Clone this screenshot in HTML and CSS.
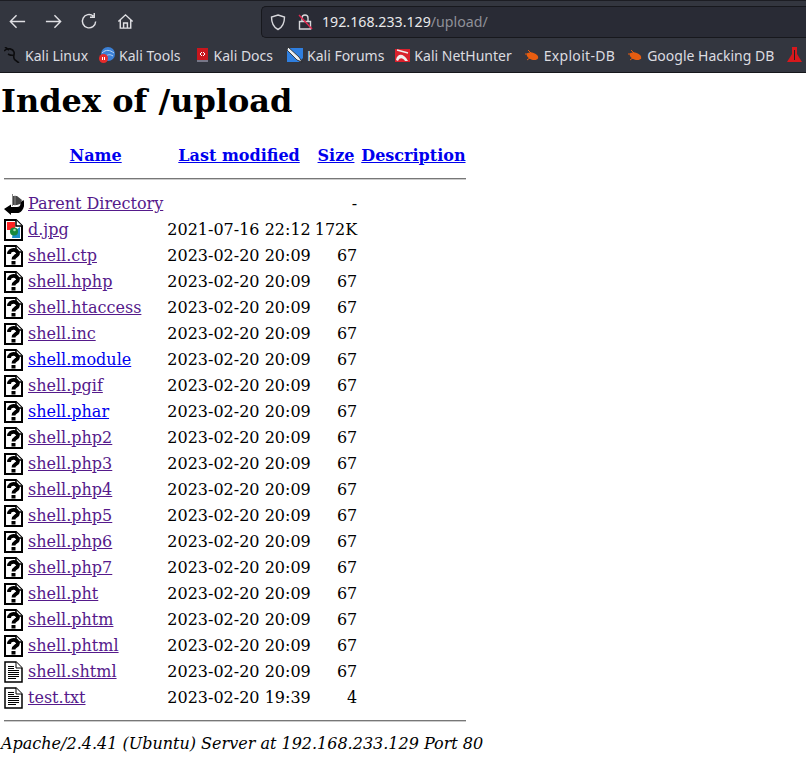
FILE: index.html
```html
<!DOCTYPE html>
<html>
<head>
<meta charset="utf-8">
<title>Index of /upload</title>
<link rel="stylesheet" href="styles.css">
</head>
<body>
<svg class="defs" width="0" height="0">
  <symbol id="doc" viewBox="0 0 20 22"><path d="M1 1H12L18 7V21H1Z" fill="#fff" stroke="#000" stroke-width="2"/><path d="M12 1V7H18" fill="#fff" stroke="#000" stroke-width="1.500"/></symbol>
  <symbol id="unknown" viewBox="0 0 20 22"><use href="#doc"/><path d="M5 9C5 3.500 14 3.500 14 8.500C14 11 9.500 11 9.500 14.500" fill="none" stroke="#000" stroke-width="3.800"/><rect x="7.500" y="16" width="4" height="3.500" fill="#000"/></symbol>
  <symbol id="text" viewBox="0 0 20 22"><path d="M1 1H12L18 7V21H1Z" fill="#fff" stroke="#000" stroke-width="1.500"/><path d="M12 1V7H18" fill="#fff" stroke="#000"/><path d="M4 5.500H10M4 7.500H10M4 9.500H15M4 11.500H15M4 13.500H15M4 15.500H15M4 17.500H12" stroke="#000"/></symbol>
  <symbol id="image" viewBox="0 0 20 22"><use href="#doc"/><path d="M3 3H11V11H3Z" fill="#f22"/><path d="M9 13L16 8V19H8Z" fill="#1c8fc8"/><circle cx="10" cy="12.500" r="4" fill="#17893c"/><circle cx="10.500" cy="11" r="1.300" fill="#9fdcae"/></symbol>
  <symbol id="back" viewBox="0 0 20 22"><path d="M0 16L7 11.500V14H13C16 14 17 12 16 9.500L19.500 7C21 11 20 15 18 17.500C16.500 19.500 15 20 13 20H7V22Z" fill="#000"/><path d="M8 3L13 3L18 7L16 11L13 12H8Z" fill="#444"/><path d="M8.500 1V13M11 2.500V12.500" stroke="#888"/></symbol>
</svg>
<header class="chrome">
  <div class="navbar">
    <div class="navicons">
      <svg class="nav" viewBox="0 0 20 20"><path d="M18 10H3M9 3.500L2.500 10L9 16.500"/></svg>
      <svg class="nav" viewBox="0 0 20 20"><path d="M2 10H17M11 3.500L17.500 10L11 16.500"/></svg>
      <svg class="nav" viewBox="0 0 20 20"><path d="M16.500 10A7 7 0 1 1 14 4.300M15 1V5.500H10.500"/></svg>
      <svg class="nav" viewBox="0 0 20 20"><path d="M2.500 10L10 3L17.500 10M4.500 8.500V17H15.500V8.500M8 17V11.500H12V17"/></svg>
    </div>
    <div class="urlbar">
      <svg class="shield" viewBox="0 0 18 18"><path d="M9 2L15.500 4C15.500 10 14 14 9 16.500C4 14 2.500 10 2.500 4Z"/></svg>
      <svg class="lock" viewBox="0 0 18 18"><path d="M6 8V5A3 3 0 0 1 12 5V8M3.500 8.500H14.500V16H3.500Z"/><path class="slash" d="M3 2L16 16"/></svg>
      <span class="host">192.168.233.129</span><span class="path">/upload/</span>
    </div>
  </div>
  <nav class="bookmarks">
    <span class="bm first"><svg class="fav" viewBox="0 0 16 16"><path d="M0 4C4 0 9 2 10 5C11 8 8 10 11 13L15 16M5 3L1 0M10 8C7 9 6 8 4 7" fill="none" stroke="#0c0c0e" stroke-width="1.600"/></svg>Kali Linux</span>
    <span class="bm"><svg class="fav" viewBox="0 0 16 16"><circle cx="9" cy="7" r="7" fill="#3b80d6"/><path d="M3 6C7 2 11 3 15 6M6 11C8 7 11 7 14 9" stroke="#bcd6f5" fill="none"/><circle cx="4.500" cy="11.500" r="4.500" fill="#e62b2b"/><path d="M3.500 10V13M5.500 10V13" stroke="#fff"/></svg>Kali Tools</span>
    <span class="bm pad1"><svg class="fav" viewBox="0 0 16 16"><path d="M3 1H14V13H3Z" fill="#c8161d"/><path d="M3 13H14V15H3Z" fill="#778"/><path d="M6 7L8 5M6 7L8 9M11 7L9 5M11 7L9 9" stroke="#fff"/></svg>Kali Docs</span>
    <span class="bm pad2"><svg class="fav" viewBox="0 0 16 16"><path d="M0 1H16V11L12 15H0Z" fill="#2f7fe0"/><path d="M1 0L12 10L15 15L10 13L0 3Z" fill="#eee" stroke="#222" stroke-width=".8"/></svg>Kali Forums</span>
    <span class="bm tuck"><svg class="fav" viewBox="0 0 16 16"><path d="M1 2H16V15H1Z" fill="#d9202c"/><path d="M2 13C3 7 9 5 14 14L11 14C9 11 6 10 4 14Z" fill="#eee"/><path d="M3 3L14 6" stroke="#eee" stroke-width="1.500"/></svg>Kali NetHunter</span>
    <span class="bm"><svg class="fav" viewBox="0 0 16 16"><ellipse cx="8.500" cy="9" rx="6" ry="3.500" fill="#e85d10" transform="rotate(20 8 9)"/><path d="M1 7H7M4 3L8 7M3 13L7 10" stroke="#e85d10"/></svg><span class="wide">Exploit-DB</span></span>
    <span class="bm"><svg class="fav" viewBox="0 0 16 16"><ellipse cx="8.500" cy="9" rx="6" ry="3.500" fill="#e85d10" transform="rotate(20 8 9)"/><path d="M1 7H7M4 3L8 7M3 13L7 10" stroke="#e85d10"/></svg>Google Hacking DB</span>
    <span class="bm"><svg class="fav" viewBox="0 0 16 16"><path d="M6 0H11V7L16 15H1L6 7Z" fill="#d8181c"/><path d="M8 3H9V13H8Z" fill="#222"/></svg></span>
  </nav>
</header>
<main class="page">
<h1>Index of /upload</h1>
<table>
<tr><th class="ic"></th><th><a class="new" href="#">Name</a></th><th><a class="new" href="#">Last modified</a></th><th><a class="new" href="#">Size</a></th><th class="end"><a class="new" href="#">Description</a></th></tr>
<tr><th colspan="5" class="rule"><hr></th></tr>
<tr><td class="ic"><svg class="ico"><use href="#back"/></svg></td><td><a href="#">Parent Directory</a></td><td></td><td class="size">-</td><td></td></tr>
<tr><td class="ic"><svg class="ico"><use href="#image"/></svg></td><td><a href="#">d.jpg</a></td><td>2021-07-16 22:12</td><td class="size">172K</td><td></td></tr>
<tr><td class="ic"><svg class="ico"><use href="#unknown"/></svg></td><td><a href="#">shell.ctp</a></td><td>2023-02-20 20:09</td><td class="size">67</td><td></td></tr>
<tr><td class="ic"><svg class="ico"><use href="#unknown"/></svg></td><td><a href="#">shell.hphp</a></td><td>2023-02-20 20:09</td><td class="size">67</td><td></td></tr>
<tr><td class="ic"><svg class="ico"><use href="#unknown"/></svg></td><td><a href="#">shell.htaccess</a></td><td>2023-02-20 20:09</td><td class="size">67</td><td></td></tr>
<tr><td class="ic"><svg class="ico"><use href="#unknown"/></svg></td><td><a href="#">shell.inc</a></td><td>2023-02-20 20:09</td><td class="size">67</td><td></td></tr>
<tr><td class="ic"><svg class="ico"><use href="#unknown"/></svg></td><td><a class="new" href="#">shell.module</a></td><td>2023-02-20 20:09</td><td class="size">67</td><td></td></tr>
<tr><td class="ic"><svg class="ico"><use href="#unknown"/></svg></td><td><a href="#">shell.pgif</a></td><td>2023-02-20 20:09</td><td class="size">67</td><td></td></tr>
<tr><td class="ic"><svg class="ico"><use href="#unknown"/></svg></td><td><a class="new" href="#">shell.phar</a></td><td>2023-02-20 20:09</td><td class="size">67</td><td></td></tr>
<tr><td class="ic"><svg class="ico"><use href="#unknown"/></svg></td><td><a href="#">shell.php2</a></td><td>2023-02-20 20:09</td><td class="size">67</td><td></td></tr>
<tr><td class="ic"><svg class="ico"><use href="#unknown"/></svg></td><td><a href="#">shell.php3</a></td><td>2023-02-20 20:09</td><td class="size">67</td><td></td></tr>
<tr><td class="ic"><svg class="ico"><use href="#unknown"/></svg></td><td><a href="#">shell.php4</a></td><td>2023-02-20 20:09</td><td class="size">67</td><td></td></tr>
<tr><td class="ic"><svg class="ico"><use href="#unknown"/></svg></td><td><a href="#">shell.php5</a></td><td>2023-02-20 20:09</td><td class="size">67</td><td></td></tr>
<tr><td class="ic"><svg class="ico"><use href="#unknown"/></svg></td><td><a href="#">shell.php6</a></td><td>2023-02-20 20:09</td><td class="size">67</td><td></td></tr>
<tr><td class="ic"><svg class="ico"><use href="#unknown"/></svg></td><td><a href="#">shell.php7</a></td><td>2023-02-20 20:09</td><td class="size">67</td><td></td></tr>
<tr><td class="ic"><svg class="ico"><use href="#unknown"/></svg></td><td><a href="#">shell.pht</a></td><td>2023-02-20 20:09</td><td class="size">67</td><td></td></tr>
<tr><td class="ic"><svg class="ico"><use href="#unknown"/></svg></td><td><a href="#">shell.phtm</a></td><td>2023-02-20 20:09</td><td class="size">67</td><td></td></tr>
<tr><td class="ic"><svg class="ico"><use href="#unknown"/></svg></td><td><a href="#">shell.phtml</a></td><td>2023-02-20 20:09</td><td class="size">67</td><td></td></tr>
<tr><td class="ic"><svg class="ico"><use href="#text"/></svg></td><td><a href="#">shell.shtml</a></td><td>2023-02-20 20:09</td><td class="size">67</td><td></td></tr>
<tr><td class="ic"><svg class="ico"><use href="#text"/></svg></td><td><a href="#">test.txt</a></td><td>2023-02-20 19:39</td><td class="size">4</td><td></td></tr>
<tr><th colspan="5" class="rule"><hr class="last"></th></tr>
</table>
<address>Apache/2.4.41 (Ubuntu) Server at 192.168.233.129 Port 80</address>
</main>
</body>
</html>
```
FILE: styles.css
```css
html, body { margin: 0; padding: 0; background: #fff; overflow: hidden; }
body { height: 775px; font-family: "DejaVu Serif", serif; font-size: 16px; color: #000; }
.defs { position: absolute; }
.chrome { height: 73px; box-sizing: border-box; background: #33363f; border-top: 1px solid #1c1d23; border-bottom: 1px solid #16171c; font-family: "Noto Sans", sans-serif; color: #e6e6e8; overflow: hidden; }
.navbar { display: flex; align-items: center; height: 36px; }
.navicons { display: flex; gap: 17px; padding-left: 8px; width: 261px; box-sizing: border-box; margin-top: 5px; }
.nav { width: 19px; height: 19px; fill: none; stroke: #e0e0e4; stroke-width: 1.500; }
.urlbar { flex: 1; display: flex; align-items: center; height: 32px; box-sizing: border-box; margin-top: 5px; background: #292b35; border: 1px solid #17181d; border-right: 0; border-radius: 5px 0 0 5px; padding-left: 7px; font-size: 14.200px; }
.shield, .lock { width: 18px; height: 18px; fill: none; stroke: #d8d8dc; stroke-width: 1.400; }
.lock { margin-left: 9px; margin-right: 8px; }
.slash { stroke: #e22850; }
.host { color: #e8e8ea; }
.path { color: #8f9098; }
.bookmarks { display: flex; align-items: center; height: 36px; padding-left: 4px; gap: 12px; font-size: 14px; white-space: nowrap; }
.bm { display: inline-flex; align-items: center; gap: 4px; color: #dcdce0; }
.first { gap: 5px; margin-right: -1px; }
.pad1 { margin-left: 1px; }
.pad2 { margin-left: 2px; }
.tuck { margin-left: -2px; }
.wide { letter-spacing: .3px; }
.fav { width: 16px; height: 16px; flex: none; }
.page { padding-left: 1px; }
h1 { font-size: 32px; line-height: 38px; margin: 9px 0 22px; font-weight: 700; }
table { border-collapse: separate; border-spacing: 2px 0; margin-left: 1px; }
th, td { padding: 1px; height: 24px; vertical-align: middle; line-height: 24px; white-space: nowrap; }
th { font-weight: 700; padding-bottom: 0; }
th.ic, td.ic { width: 21px; padding: 1px 0; }
th.end { padding-right: 0; }
.ico { display: block; width: 20px; height: 22px; }
.size { text-align: right; }
.rule { height: auto; line-height: 0; padding: 0; }
hr { margin: 10px 0 11px; border: 0; border-top: 1px solid #777; border-bottom: 1px solid #ccc; }
hr.last { margin-top: 9px; }
a { color: #551a8b; text-decoration: underline; }
a.new { color: #0000ee; }
address { font-style: italic; line-height: 24px; margin-top: -1px; }
```
